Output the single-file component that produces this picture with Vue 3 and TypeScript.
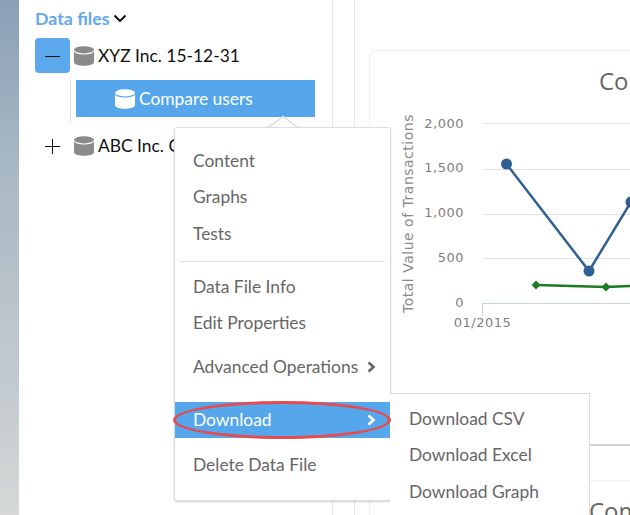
<template>
  <div class="page">
    <div class="strip"></div>

    <aside class="sidebar">
      <div class="tree">
        <div class="heading">
          <span>Data files</span>
          <svg width="14" height="9" viewBox="0 0 14 9"><path d="M1.500 1.500 7 7l5.500-5.500" fill="none" stroke="#111" stroke-width="2" /></svg>
        </div>
        <div class="tree-row">
          <button class="toggle toggle--open"><span class="minus"></span></button>
          <svg class="db" width="20" height="20" viewBox="0 0 20 20" fill="#8a8a8a"><ellipse cx="10" cy="3.800" rx="10" ry="3.600" /><path d="M0 5.200c1 2.200 5 3.200 10 3.200s9-1 10-3.200v11.300c-1 2.300-5 3.300-10 3.300s-9-1-10-3.300z" /></svg>
          <span>XYZ Inc. 15-12-31</span>
        </div>
        <div class="children">
          <div class="child">
            <svg class="db" width="20" height="20" viewBox="0 0 20 20" fill="#fff"><ellipse cx="10" cy="3.800" rx="10" ry="3.600" /><path d="M0 5.200c1 2.200 5 3.200 10 3.200s9-1 10-3.200v11.300c-1 2.300-5 3.300-10 3.300s-9-1-10-3.300z" /></svg>
            <span>Compare users</span>
          </div>
        </div>
        <div class="tree-row tree-row--last">
          <button class="toggle">
            <span class="minus"></span>
            <span class="minus minus--v"></span>
          </button>
          <svg class="db" width="20" height="20" viewBox="0 0 20 20" fill="#8a8a8a"><ellipse cx="10" cy="3.800" rx="10" ry="3.600" /><path d="M0 5.200c1 2.200 5 3.200 10 3.200s9-1 10-3.200v11.300c-1 2.300-5 3.300-10 3.300s-9-1-10-3.300z" /></svg>
          <span>ABC Inc. C</span>
        </div>
      </div>
    </aside>

    <main class="content">
      <section class="card">
        <h2 class="card__title">Compare users</h2>
        <svg class="chart" width="261" height="230" viewBox="369 105 261 230">
          <line v-for="y in gridYs" :key="y" x1="482" x2="630" :y1="y" :y2="y" stroke="#dfe1e5" stroke-width="1" />
          <path d="M481.500 303.500H630M481.500 303v13" fill="none" stroke="#c5d2e2" stroke-width="1" />
          <text v-for="t in ticks" :key="t.label" x="463" :y="t.y" text-anchor="end" class="tick">{{ t.label }}</text>
          <text x="481.500" y="327" text-anchor="middle" class="tick">01/2015</text>
          <text transform="translate(411.500 213.500) rotate(-90)" text-anchor="middle" class="axis">Total Value of Transactions</text>
          <polyline points="505.500,164 588,271 630,202" fill="none" stroke="#2f6093" stroke-width="2.500" />
          <circle v-for="p in bluePoints" :key="p[0]" :cx="p[0]" :cy="p[1]" r="5.500" fill="#2f6093" />
          <polyline points="535,285 605,287 630,286" fill="none" stroke="#1c7a20" stroke-width="2.500" />
          <path v-for="p in greenPoints" :key="p[0]" :d="diamond(p)" fill="#1c7a20" />
        </svg>
      </section>
      <section class="card card--next">
        <h2 class="card__title card__title--next">Compare users</h2>
      </section>
    </main>

    <nav class="menu">
      <a v-for="item in topItems" :key="item" class="menu__item">{{ item }}</a>
      <div class="menu__divider"></div>
      <a class="menu__item menu__item--info">Data File Info</a>
      <a class="menu__item menu__item--info">Edit Properties</a>
      <a class="menu__item menu__item--more">
        Advanced Operations
        <svg width="9" height="12" viewBox="0 0 9 12"><path d="M1.500 1.500 6.500 6l-5 4.500" fill="none" stroke="#666" stroke-width="2.600" /></svg>
      </a>
      <a class="menu__item menu__item--active">
        Download
        <svg width="9" height="12" viewBox="0 0 9 12"><path d="M1.500 1.500 6.500 6l-5 4.500" fill="none" stroke="#fff" stroke-width="2.600" /></svg>
      </a>
      <a class="menu__item">Delete Data File</a>
    </nav>
    <svg class="pointer" width="32" height="13" viewBox="0 0 32 13"><path d="M0 12h2L16 1.500 30 12h2" fill="#fff" stroke="#ddd" stroke-width="1.500" /></svg>
    <nav class="submenu">
      <a v-for="item in subItems" :key="item" class="menu__item">{{ item }}</a>
    </nav>
    <div class="highlight"></div>
  </div>
</template>

<script setup lang="ts">
const gridYs = [123.5, 169.5, 214.5, 258.5]
const ticks = [
  { label: "2,000", y: 128 },
  { label: "1,500", y: 172 },
  { label: "1,000", y: 217 },
  { label: "500", y: 262 },
  { label: "0", y: 307 },
]
const bluePoints: number[][] = [
  [505.5, 164],
  [588, 271],
  [630, 202],
]
const greenPoints: number[][] = [
  [535, 285],
  [605, 287],
]
const topItems = ["Content", "Graphs", "Tests"]
const subItems = ["Download CSV", "Download Excel", "Download Graph"]

function diamond(p: number[]): string {
  const [x, y] = p
  return `M${x - 4.5} ${y}L${x} ${y - 4.5}L${x + 4.5} ${y}L${x} ${y + 4.5}Z`
}
</script>

<style>
html,
body {
  margin: 0;
  background: #fff;
}
</style>

<style scoped>
.page {
  position: relative;
  display: flex;
  width: 630px;
  height: 515px;
  overflow: hidden;
  font-family: Lato, "Liberation Sans", sans-serif;
  font-size: 17.4px;
  color: #111;
}
.strip {
  flex: 0 0 19px;
  background: linear-gradient(180deg, #8aa0b6, #a9b8c4 33%, #c5ccd0 78%, #d5d8d6);
}
.sidebar {
  flex: 0 0 336px;
  box-sizing: border-box;
  border-right: 1px solid #e6e6e6;
}
.tree {
  box-sizing: border-box;
  width: 314px;
  height: 100%;
  padding: 8px 0 0 16px;
  border-right: 1px solid #e6e6e6;
}
.heading {
  display: flex;
  align-items: center;
  gap: 3px;
  height: 20px;
  font-size: 17.8px;
  font-weight: 700;
  color: #62a9ec;
}
.tree-row {
  display: flex;
  align-items: center;
  height: 35px;
  margin-top: 10px;
}
.tree-row--last {
  margin-top: 6px;
}
.toggle {
  position: relative;
  flex: 0 0 35px;
  height: 35px;
  margin: 0 4px 0 0;
  padding: 0;
  border: 0;
  border-radius: 4px;
  background: transparent;
}
.toggle--open {
  background: #5ba9ec;
}
.minus {
  position: absolute;
  left: 10px;
  top: 18px;
  width: 15px;
  height: 1px;
  background: #111;
}
.minus--v {
  left: 17px;
  top: 11px;
  width: 1px;
  height: 15px;
}
.db {
  flex: none;
  margin-right: 4px;
}
.children {
  box-sizing: border-box;
  width: 245px;
  margin: 7px 0 0 35px;
  padding: 0 0 5px 5px;
  border-left: 1px solid #ddd;
}
.child {
  display: flex;
  align-items: center;
  height: 37px;
  padding-left: 39px;
  background: #55a6ea;
  color: #fff;
}
.content {
  flex: 1;
  min-width: 0;
  padding: 50px 0 0 14px;
}
.card {
  box-sizing: border-box;
  width: 400px;
  height: 396px;
  border: 1px solid #eee;
  border-bottom: 2px solid #d4d4d4;
  border-radius: 8px 0 0 0;
}
.card--next {
  height: 100px;
  margin-top: 34px;
  border-bottom: 0;
  border-radius: 0;
}
.card__title {
  margin: 15px 0 0 229px;
  font-family: "Open Sans", sans-serif;
  font-size: 24px;
  font-weight: 400;
  line-height: 30px;
  color: #666;
  white-space: nowrap;
}
.card__title--next {
  margin: 15px 0 0 219px;
}
.chart {
  display: block;
  margin-top: 9px;
}
.tick {
  font-family: "DejaVu Sans", sans-serif;
  font-size: 13px;
  letter-spacing: 0.5px;
  fill: #808080;
}
.axis {
  font-family: "DejaVu Sans", sans-serif;
  font-size: 14px;
  letter-spacing: 0.5px;
  fill: #8a8a8a;
}
.pointer {
  position: absolute;
  left: 267px;
  top: 115px;
}
.menu {
  position: absolute;
  left: 174px;
  top: 127px;
  box-sizing: border-box;
  width: 217px;
  height: 374px;
  padding-top: 14px;
  background: #fff;
  border: 1px solid #ddd;
  border-radius: 3px;
  box-shadow: 0 1px 2px rgba(0, 0, 0, 0.2);
}
.submenu {
  position: absolute;
  left: 390px;
  top: 393px;
  box-sizing: border-box;
  width: 200px;
  height: 130px;
  padding-top: 6px;
  background: #fff;
  border: 1px solid #ddd;
  border-left: 0;
}
.menu__item {
  display: flex;
  align-items: center;
  justify-content: space-between;
  box-sizing: border-box;
  height: 36.500px;
  padding: 0 14px 0 18px;
  color: #666;
  white-space: nowrap;
}
.menu__divider {
  height: 1px;
  margin: 9px 5px 7px 5px;
  background: #ddd;
}
.menu__item--info {
  height: 36px;
}
.menu__item--more {
  height: 36px;
  margin-top: 8px;
}
.menu__item--active {
  height: 36px;
  margin-top: 17px;
  background: #55a6ea;
  color: #fff;
}
.menu__item--active + .menu__item {
  margin-top: 9px;
}
.submenu .menu__item {
  padding-left: 19px;
}
.highlight {
  position: absolute;
  left: 173px;
  top: 401px;
  box-sizing: border-box;
  width: 218px;
  height: 38px;
  border: 3px solid #e54b4f;
  border-radius: 50%;
}
</style>
